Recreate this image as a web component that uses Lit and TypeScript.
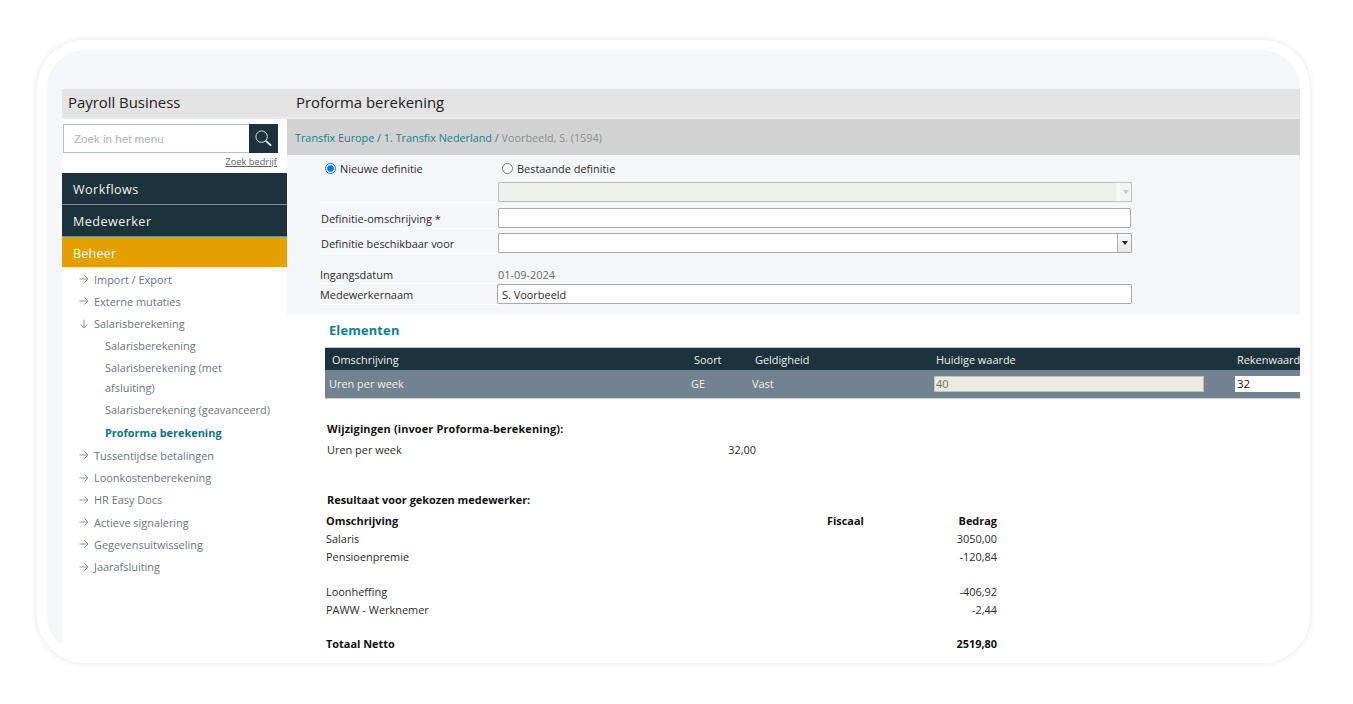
import { LitElement, html, css, svg } from "lit";
import { customElement } from "lit/decorators.js";

const arrowRight = svg`<svg class="arrow" viewBox="0 0 10 10" width="10" height="10"><path d="M0.5 5H9M5.5 1.5L9 5L5.5 8.5" fill="none" stroke="#8b979b" stroke-width="1"/></svg>`;
const arrowDown = svg`<svg class="arrow" viewBox="0 0 10 10" width="10" height="10"><path d="M5 0.5V9M1.5 5.5L5 9L8.5 5.5" fill="none" stroke="#8b979b" stroke-width="1"/></svg>`;

@customElement("app-root")
export class AppRoot extends LitElement {
  static styles = css`
    :host { display: block; width: 1353px; height: 704px; background: #fff; overflow: hidden;
      padding: 40px 43px 41px 37px; box-sizing: border-box;
      font-family: "Open Sans", "Noto Sans", sans-serif; font-size: 10.93px; color: #2b2b2b; }
    .frame { height: 623px; box-sizing: border-box; border: 10px solid #fff; border-radius: 48px;
      box-shadow: 0 0 7px rgba(0,0,0,.11); background: #f5f6f8; overflow: hidden;
      padding: 39px 0 0 15px; display: flex; flex-direction: column; width: 1273px; }
    .top { display: grid; grid-template-columns: 225px 1fr; height: 30px; box-sizing: border-box; background: #e4e4e4;
      border-bottom: 2px solid #ececec; padding-bottom: 3px; align-items: center;
      font-size: 14.9px; color: #222; flex: none; }
    .top span:first-child { padding-left: 6px; }
    .top span:last-child { padding-left: 9px; }
    .body { flex: 1; display: grid; grid-template-columns: 225px 1fr; min-height: 0; }
    .side { background: #fff; display: flex; flex-direction: column; padding-top: 5px; box-sizing: border-box; }
    .search { display: flex; height: 29px; margin: 0 9px 0 1px; }
    .search .field { flex: 1; border: 1px solid #b4c0c8; border-right: 0; box-sizing: border-box;
      color: #a9b4b8; font-family: "Liberation Sans", sans-serif; font-size: 11.6px; line-height: 28px; padding-left: 10px; }
    .search .btn { width: 29px; background: #1c323c; display: flex; align-items: center; justify-content: center; }
    .zoek { text-align: right; font-size: 9.3px; line-height: 12px; text-decoration: underline; color: #55666c;
      margin: 3px 10px 5px 0; height: 12px; }
    .nav { height: 31px; box-sizing: content-box; padding: 0 0 0 11px; display: flex; align-items: center; color: #f2f2f2; font-size: 12.6px;
      background: #1c323c; border-bottom: 1px solid #7b8a8f; letter-spacing: .45px; flex: none; }
    .nav span { position: relative; top: 1px; }
    .nav.orange { background: #e4a000; border-bottom: 0; height: 30px; color: #fff; letter-spacing: .2px; }
    .menu { padding-top: 1px; color: #68777d; }
    .mi { display: flex; align-items: center; height: 22.3px; padding-left: 17px; gap: 5px; }
    .arrow { flex: none; }
    .sub { padding-left: 43px; line-height: 20px; padding-top: 1px; padding-bottom: 1.3px; }
    .cur { color: #0f7480; font-weight: 700; }
    .main { display: flex; flex-direction: column; min-width: 0; overflow: hidden; }
    .crumb { height: 36px; background: #d2d2d2; display: flex; align-items: center; padding-left: 8px; color: #8a8f90; flex: none; font-size: 10.82px; }
    .crumb b { font-weight: 400; color: #1c7f88; }
    .form { height: 160px; flex: none; box-sizing: border-box; padding: 6px 168px 0 33px; }
    .fr { display: grid; grid-template-columns: 178px 1fr; align-items: center; height: 20px; }
    .fr > label { color: #2b2b2b; box-shadow: 0 1px 0 #fff; height: 100%; display: flex; align-items: center; padding-left: 1px; }
    .fr.g6 { margin-top: 6px; }
    .fr.g5 { margin-top: 5px; }
    .fr.date { height: 18px; margin-top: 12px; }
    .fr.name { margin-top: 1px; }
    .fr.date > label, .fr.name > label { padding-left: 0; }
    .date-val { color: #6b6b6b; }
    .radios { display: grid; grid-template-columns: 177px 1fr; padding-left: 5px; height: 15px; margin-bottom: 6px; }
    .radios label { display: flex; align-items: center; gap: 4px; }
    .radios input { margin: 0; width: 11px; height: 11px; }
    .box { box-sizing: border-box; border: 1px solid #a9a9a9; background: #fff; height: 20px; display: flex; align-items: center;
      padding-left: 5px; border-radius: 1px; }
    .box.sel { padding: 0; }
    .box.dis { background: #f0f1ec; border-color: #bdbdbd; }
    .box.nr { margin-right: 1px; }
    .box.nl { margin-left: -1px; padding-left: 4px; }
    .drop { margin-left: auto; width: 14px; height: 100%; background: linear-gradient(#fafafa,#e6e6e6); border-left: 1px solid #aaa;
      display: flex; align-items: center; justify-content: center; box-sizing: border-box; }
    .drop i { border: 3.5px solid transparent; border-top: 4px solid #222; border-bottom: 0; }
    .dis .drop { background: #f4f4f4; border-left: 3px solid #fafafa; }
    .dis .drop i { border-top-color: #c8c8c8; }
    .content { flex: 1; background: #fff; padding: 0 0 0 38px; min-height: 0; color: #2b2b2b; }
    h3 { margin: 0; font-size: 12.8px; line-height: 31px; height: 32px; color: #0f7f8a; font-weight: 700; padding-left: 4px; letter-spacing: .2px; }
    .tbl { display: grid; grid-template-columns: 362px 61px 181px 301px 1fr; width: 975px; border-top: 1px solid #c4c4c4; }
    .th { background: #1c323c; color: #f0f0f0; height: 22px; padding-left: 7px; display: flex; align-items: center; white-space: nowrap; overflow: hidden; }
    .td { background: #738290; color: #f0f0f0; height: 29px; padding: 0 0 1px 4px; display: flex; align-items: center; border-bottom: 1px solid #c9ced2; box-sizing: border-box; white-space: nowrap; }
    .inp { box-sizing: border-box; height: 16px; margin-left: 1px; width: 270px; background: #ebebe4; border: 1px solid #bfc2bc; color: #6b6b6b; display: flex; align-items: center; padding-left: 1px; }
    .inp.w { background: #fff; color: #111; border: 0; width: 80px; padding-left: 2px; font-size: 11.5px; }
    .sec { margin: 22px 0 0 2px; }
    .sec .bold { letter-spacing: .14px; }
    .bold { font-weight: 700; color: #111; }
    .pair { width: 429px; display: flex; justify-content: space-between; line-height: 18px; margin-top: 5px; }
    .res { margin-top: 33px; margin-left: 2px; }
    .grid { display: grid; grid-template-columns: 501px 36px 134px; width: 671px; line-height: 18px; margin: 5px 0 0 -1px; }
    .grid .r { text-align: right; }
    .gap { height: 17px; grid-column: 1 / 4; }
    .gap.s { height: 16px; }
  `;

  row(a: string, b: string, bold = false) {
    return html`<div class=${bold ? "bold" : ""}>${a}</div><div></div><div class="r ${bold ? "bold" : ""}">${b}</div>`;
  }

  render() {
    const closed1 = ["Import / Export", "Externe mutaties"];
    const closed2 = ["Tussentijdse betalingen", "Loonkostenberekening", "HR Easy Docs", "Actieve signalering", "Gegevensuitwisseling", "Jaarafsluiting"];
    return html`
      <div class="frame">
        <div class="top"><span>Payroll Business</span><span>Proforma berekening</span></div>
        <div class="body">
          <aside class="side">
            <div class="search">
              <div class="field">Zoek in het menu</div>
              <div class="btn">
                <svg viewBox="0 0 20 20" width="19" height="19"><circle cx="8" cy="8" r="6" fill="none" stroke="#e8eef0" stroke-width="1"/><path d="M12.5 12.5L18 17.5" stroke="#e8eef0" stroke-width="2"/></svg>
              </div>
            </div>
            <div class="zoek">Zoek bedrijf</div>
            <div class="nav"><span>Workflows</span></div>
            <div class="nav"><span>Medewerker</span></div>
            <div class="nav orange"><span>Beheer</span></div>
            <div class="menu">
              ${closed1.map((t) => html`<div class="mi">${arrowRight}<span>${t}</span></div>`)}
              <div class="mi">${arrowDown}<span>Salarisberekening</span></div>
              <div class="sub">Salarisberekening</div>
              <div class="sub">Salarisberekening (met<br />afsluiting)</div>
              <div class="sub">Salarisberekening (geavanceerd)</div>
              <div class="sub cur">Proforma berekening</div>
              ${closed2.map((t) => html`<div class="mi">${arrowRight}<span>${t}</span></div>`)}
            </div>
          </aside>
          <main class="main">
            <div class="crumb"><span><b>Transfix Europe / 1. Transfix Nederland /</b> Voorbeeld, S. (1594)</span></div>
            <div class="form">
              <div class="radios">
                <label><input type="radio" name="d" checked />Nieuwe definitie</label>
                <label><input type="radio" name="d" />Bestaande definitie</label>
              </div>
              <div class="fr"><label></label><div class="box sel dis"><span class="drop"><i></i></span></div></div>
              <div class="fr g6"><label>Definitie-omschrijving *</label><div class="box nr"></div></div>
              <div class="fr g5"><label>Definitie beschikbaar voor</label><div class="box sel"><span class="drop"><i></i></span></div></div>
              <div class="fr date"><label>Ingangsdatum</label><div class="date-val">01-09-2024</div></div>
              <div class="fr name"><label>Medewerkernaam</label><div class="box nl">S. Voorbeeld</div></div>
            </div>
            <div class="content">
              <h3>Elementen</h3>
              <div class="tbl">
                <div class="th">Omschrijving</div><div class="th">Soort</div><div class="th">Geldigheid</div><div class="th">Huidige waarde</div><div class="th">Rekenwaarde</div>
                <div class="td">Uren per week</div><div class="td">GE</div><div class="td">Vast</div>
                <div class="td"><div class="inp">40</div></div>
                <div class="td"><div class="inp w">32</div></div>
              </div>
              <div class="sec">
                <div class="bold">Wijzigingen (invoer Proforma-berekening):</div>
                <div class="pair"><span>Uren per week</span><span>32,00</span></div>
              </div>
              <div class="res">
                <div class="bold">Resultaat voor gekozen medewerker:</div>
                <div class="grid">
                  <div class="bold">Omschrijving</div><div class="bold">Fiscaal</div><div class="r bold">Bedrag</div>
                  ${this.row("Salaris", "3050,00")}
                  ${this.row("Pensioenpremie", "-120,84")}
                  <div class="gap"></div>
                  ${this.row("Loonheffing", "-406,92")}
                  ${this.row("PAWW - Werknemer", "-2,44")}
                  <div class="gap s"></div>
                  ${this.row("Totaal Netto", "2519,80", true)}
                </div>
              </div>
            </div>
          </main>
        </div>
      </div>
    `;
  }
}
